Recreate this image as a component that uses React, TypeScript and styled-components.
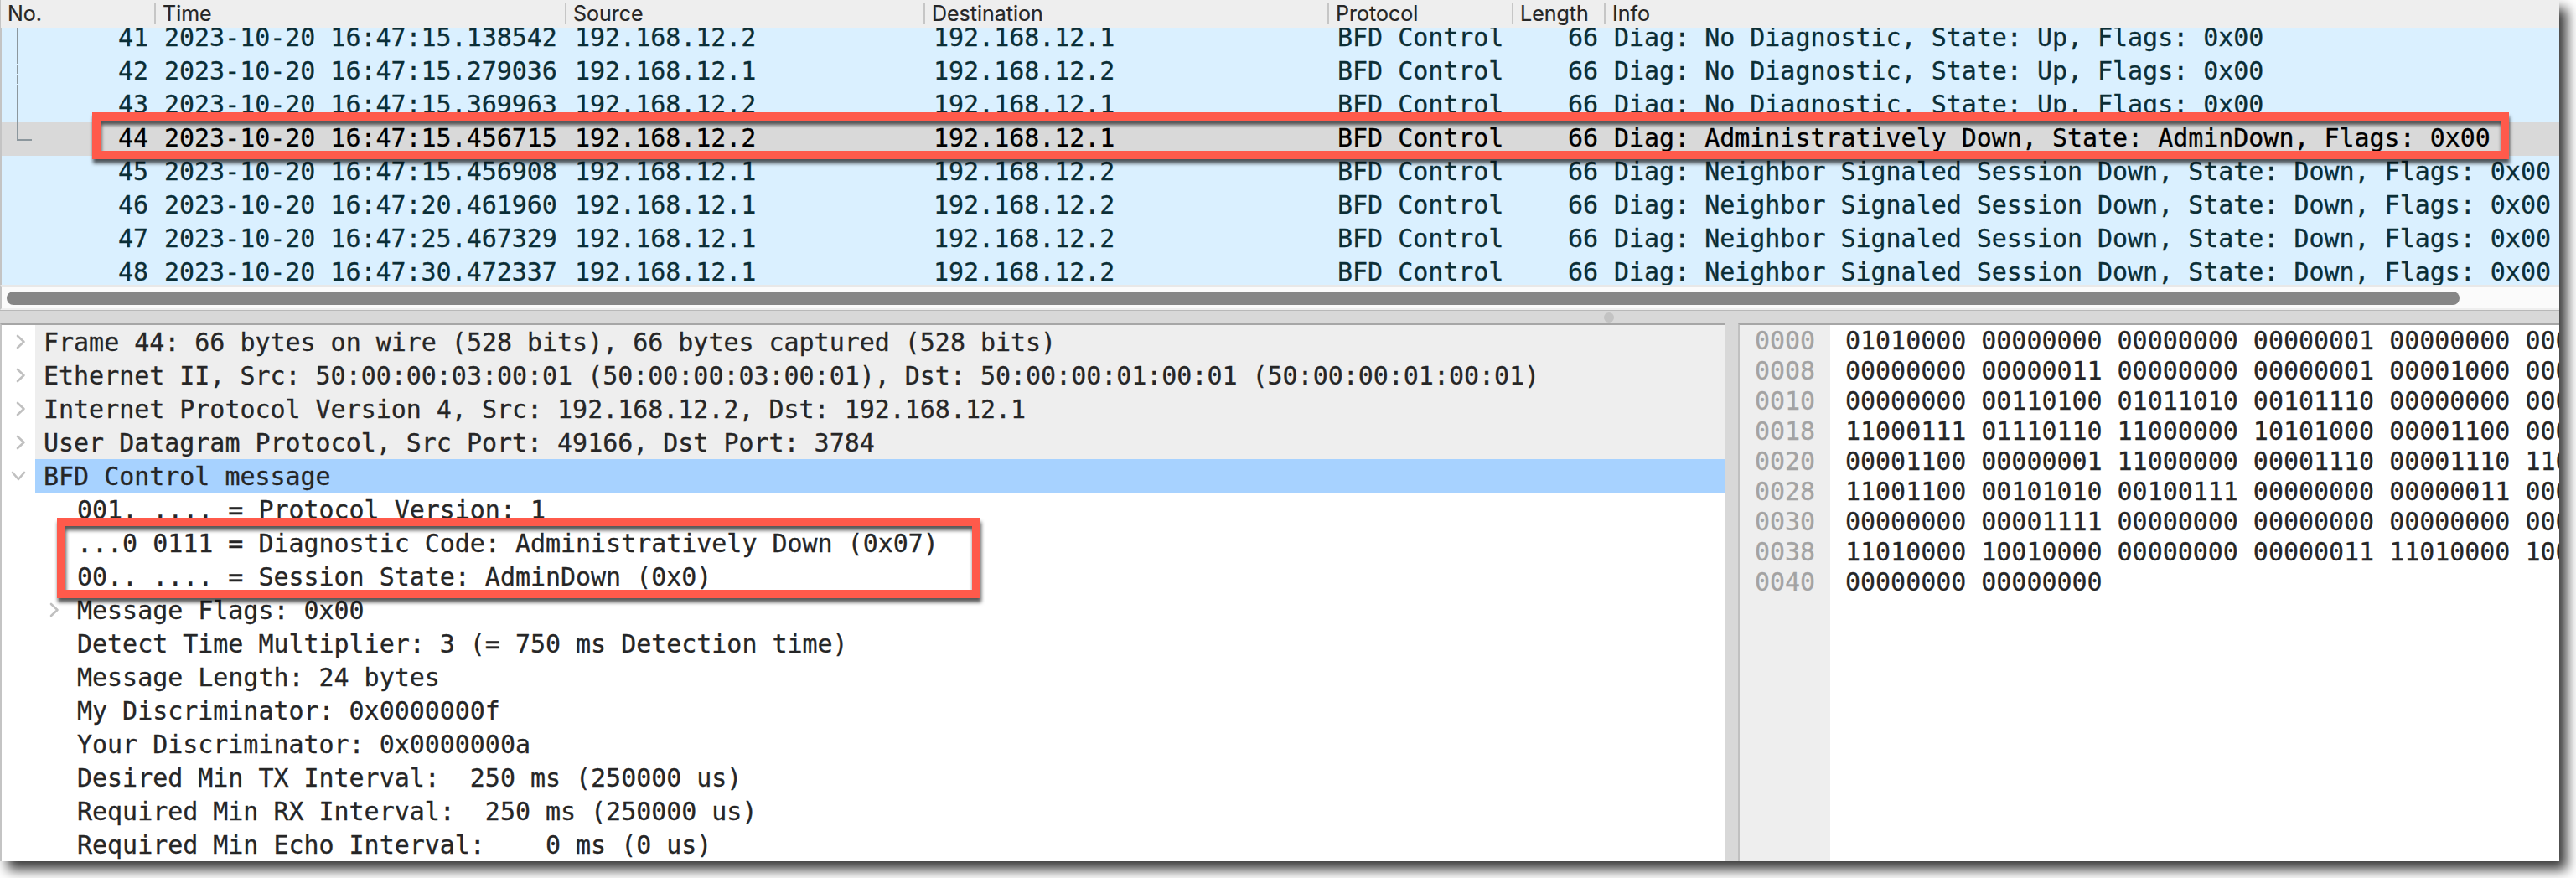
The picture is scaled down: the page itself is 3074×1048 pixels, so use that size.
import styled, { createGlobalStyle } from 'styled-components';

const packets = [
  { no: 41, time: '2023-10-20 16:47:15.138542', src: '192.168.12.2', dst: '192.168.12.1', info: 'Diag: No Diagnostic, State: Up, Flags: 0x00' },
  { no: 42, time: '2023-10-20 16:47:15.279036', src: '192.168.12.1', dst: '192.168.12.2', info: 'Diag: No Diagnostic, State: Up, Flags: 0x00' },
  { no: 43, time: '2023-10-20 16:47:15.369963', src: '192.168.12.2', dst: '192.168.12.1', info: 'Diag: No Diagnostic, State: Up, Flags: 0x00' },
  { no: 44, time: '2023-10-20 16:47:15.456715', src: '192.168.12.2', dst: '192.168.12.1', info: 'Diag: Administratively Down, State: AdminDown, Flags: 0x00' },
  { no: 45, time: '2023-10-20 16:47:15.456908', src: '192.168.12.1', dst: '192.168.12.2', info: 'Diag: Neighbor Signaled Session Down, State: Down, Flags: 0x00' },
  { no: 46, time: '2023-10-20 16:47:20.461960', src: '192.168.12.1', dst: '192.168.12.2', info: 'Diag: Neighbor Signaled Session Down, State: Down, Flags: 0x00' },
  { no: 47, time: '2023-10-20 16:47:25.467329', src: '192.168.12.1', dst: '192.168.12.2', info: 'Diag: Neighbor Signaled Session Down, State: Down, Flags: 0x00' },
  { no: 48, time: '2023-10-20 16:47:30.472337', src: '192.168.12.1', dst: '192.168.12.2', info: 'Diag: Neighbor Signaled Session Down, State: Down, Flags: 0x00' },
];

const columns = ['No.', 'Time', 'Source', 'Destination', 'Protocol', 'Length', 'Info'];

type Kind = 'layer' | 'selected' | 'field';

const details: { text: string; kind: Kind; arrow?: 'right' | 'down' }[] = [
  { text: 'Frame 44: 66 bytes on wire (528 bits), 66 bytes captured (528 bits)', kind: 'layer', arrow: 'right' },
  { text: 'Ethernet II, Src: 50:00:00:03:00:01 (50:00:00:03:00:01), Dst: 50:00:00:01:00:01 (50:00:00:01:00:01)', kind: 'layer', arrow: 'right' },
  { text: 'Internet Protocol Version 4, Src: 192.168.12.2, Dst: 192.168.12.1', kind: 'layer', arrow: 'right' },
  { text: 'User Datagram Protocol, Src Port: 49166, Dst Port: 3784', kind: 'layer', arrow: 'right' },
  { text: 'BFD Control message', kind: 'selected', arrow: 'down' },
  { text: '001. .... = Protocol Version: 1', kind: 'field' },
  { text: '...0 0111 = Diagnostic Code: Administratively Down (0x07)', kind: 'field' },
  { text: '00.. .... = Session State: AdminDown (0x0)', kind: 'field' },
  { text: 'Message Flags: 0x00', kind: 'field', arrow: 'right' },
  { text: 'Detect Time Multiplier: 3 (= 750 ms Detection time)', kind: 'field' },
  { text: 'Message Length: 24 bytes', kind: 'field' },
  { text: 'My Discriminator: 0x0000000f', kind: 'field' },
  { text: 'Your Discriminator: 0x0000000a', kind: 'field' },
  { text: 'Desired Min TX Interval:  250 ms (250000 us)', kind: 'field' },
  { text: 'Required Min RX Interval:  250 ms (250000 us)', kind: 'field' },
  { text: 'Required Min Echo Interval:    0 ms (0 us)', kind: 'field' },
];

const bytes = [
  ['0000', '01010000 00000000 00000000 00000001 00000000 000'],
  ['0008', '00000000 00000011 00000000 00000001 00001000 000'],
  ['0010', '00000000 00110100 01011010 00101110 00000000 000'],
  ['0018', '11000111 01110110 11000000 10101000 00001100 000'],
  ['0020', '00001100 00000001 11000000 00001110 00001110 110'],
  ['0028', '11001100 00101010 00100111 00000000 00000011 000'],
  ['0030', '00000000 00001111 00000000 00000000 00000000 000'],
  ['0038', '11010000 10010000 00000000 00000011 11010000 100'],
  ['0040', '00000000 00000000'],
];

export default function App() {
  return (
    <Desktop>
      <GlobalStyle />
      <Window>
        <Header>
          {columns.map((name) => (
            <HeaderCell key={name}>{name}</HeaderCell>
          ))}
        </Header>
        <PacketList>
          <PacketRows>
            {packets.map((p) => (
              <PacketRow key={p.no} $selected={p.no === 44}>
                <Cell $right>{p.no}</Cell>
                <Cell>{p.time}</Cell>
                <Cell>{p.src}</Cell>
                <Cell>{p.dst}</Cell>
                <Cell>BFD Control</Cell>
                <Cell $right>66</Cell>
                <Cell>{p.info}</Cell>
              </PacketRow>
            ))}
          </PacketRows>
          <RelatedLine width="40" height="140" viewBox="0 0 40 140">
            <path d="M19 0V42M19 44V54M19 56V66M19 68V133H36" />
          </RelatedLine>
        </PacketList>
        <ScrollTrack>
          <ScrollThumb />
        </ScrollTrack>
        <Splitter>
          <Grip />
        </Splitter>
        <Panes>
          <DetailPane>
            {details.map((d) => (
              <DetailRow key={d.text}>
                <Gutter $nested={d.kind === 'field'}>
                  {d.arrow === 'right' && (
                    <Arrow width="12" height="18" viewBox="0 0 12 18">
                      <path d="M2 2L9.5 9L2 16" />
                    </Arrow>
                  )}
                  {d.arrow === 'down' && (
                    <Arrow width="18" height="12" viewBox="0 0 18 12">
                      <path d="M2 2L9 10L16 2" />
                    </Arrow>
                  )}
                </Gutter>
                <DetailText $kind={d.kind}>{d.text}</DetailText>
              </DetailRow>
            ))}
          </DetailPane>
          <Divider />
          <BytesPane>
            <Offsets>
              {bytes.map(([offset]) => (
                <ByteLine key={offset}>{offset}</ByteLine>
              ))}
            </Offsets>
            <Bits>
              {bytes.map(([offset, bits]) => (
                <ByteLine key={offset}>{bits}</ByteLine>
              ))}
            </Bits>
          </BytesPane>
        </Panes>
      </Window>
      <Callout $x={110} $y={134} $w={2884} $h={56} />
      <Callout $x={68} $y={618} $w={1102} $h={96} />
    </Desktop>
  );
}

const GlobalStyle = createGlobalStyle`
  * {
    box-sizing: border-box;
  }

  body {
    margin: 0;
    background: #fff;
  }
`;

const Desktop = styled.div`
  position: relative;
  width: 3074px;
  height: 1048px;
  padding: 0 20px 20px 0;
  overflow: hidden;
  background: #fff;
`;

const Window = styled.div`
  display: flex;
  flex-direction: column;
  height: 1028px;
  background: #fff;
  color: #262626;
  font-family: 'DejaVu Sans Mono', monospace;
  font-size: 30px;
  letter-spacing: -0.03px;
  -webkit-text-stroke: 0.3px;
  white-space: pre;
  box-shadow: 9px 10px 14px rgba(0, 0, 0, 0.78);
`;

const Header = styled.div`
  display: grid;
  grid-template-columns: 185px 490px 428px 482px 220px 110px 1fr;
  height: 34px;
  padding: 3px 0 5px;
  background: #eee;
  border-left: 1px solid #c4c4c4;
  font-family: Inter, sans-serif;
  font-size: 25px;
  letter-spacing: 0;
  -webkit-text-stroke: 0.2px;
`;

const HeaderCell = styled.div`
  padding-left: 8px;
  line-height: 26px;
  border-right: 2px solid #c6c6c6;

  &:last-child {
    border-right: none;
  }
`;

const PacketList = styled.div`
  position: relative;
  height: 306px;
  overflow: hidden;
  border-left: 2px solid #c4c4c4;
`;

const PacketRows = styled.div`
  margin-top: -8px;
`;

const PacketRow = styled.div<{ $selected: boolean }>`
  display: grid;
  grid-template-columns: 184px 490px 428px 482px 220px 110px 1fr;
  height: 40px;
  line-height: 37px;
  background: ${({ $selected }) => ($selected ? '#d9d9d9' : '#daf0ff')};
  color: ${({ $selected }) => ($selected ? '#000' : '#0b2e36')};
`;

const Cell = styled.div<{ $right?: boolean }>`
  padding: 0 9px 0 10px;
  text-align: ${({ $right }) => ($right ? 'right' : 'left')};
`;

const RelatedLine = styled.svg`
  position: absolute;
  left: 0;
  top: 0;
  fill: none;
  stroke: #8c979d;
  stroke-width: 2;
`;

const ScrollTrack = styled.div`
  height: 30px;
  padding: 6px 119px 0 6px;
  background: #fbfbfb;
  border-top: 2px solid #e8e8e8;
  border-bottom: 2px solid #efefef;
  border-left: 2px solid #c4c4c4;
`;

const ScrollThumb = styled.div`
  height: 16px;
  border-radius: 8px;
  background: #868686;
`;

const Splitter = styled.div`
  display: flex;
  align-items: center;
  height: 16px;
  padding-left: 1914px;
  background: #d8d8d8;
  border-top: 1px solid #b8b8b8;
`;

const Grip = styled.div`
  width: 12px;
  height: 12px;
  border-radius: 50%;
  background: #c3c3c3;
`;

const Panes = styled.div`
  display: flex;
  height: 642px;
  overflow: hidden;
`;

const DetailPane = styled.div`
  width: 2059px;
  border-style: solid;
  border-width: 2px 1px 0 2px;
  border-color: #a6a6a6 #b8b8b8 #b8b8b8 #c4c4c4;
`;

const DetailRow = styled.div`
  display: flex;
  height: 40px;
`;

const Gutter = styled.div<{ $nested: boolean }>`
  display: flex;
  align-items: center;
  justify-content: flex-end;
  width: ${({ $nested }) => ($nested ? 80 : 40)}px;
  padding-right: 11px;
`;

const Arrow = styled.svg`
  fill: none;
  stroke: #c0c0c0;
  stroke-width: 2.6;
  stroke-linecap: round;
  stroke-linejoin: round;
`;

const backgrounds: Record<Kind, string> = {
  layer: '#eee',
  selected: '#a7d2ff',
  field: '#fff',
};

const DetailText = styled.div<{ $kind: Kind }>`
  flex: 1;
  padding: 1px 0 0 10px;
  line-height: 40px;
  background: ${({ $kind }) => backgrounds[$kind]};
`;

const Divider = styled.div`
  width: 15px;
  background: #d8d8d8;
`;

const BytesPane = styled.div`
  display: flex;
  flex: 1;
  min-width: 0;
  border-top: 2px solid #a6a6a6;
  border-left: 2px solid #c0c0c0;
`;

const Offsets = styled.div`
  width: 108px;
  padding-left: 18px;
  background: #eee;
  color: #a3a3a3;
`;

const Bits = styled.div`
  flex: 1;
  min-width: 0;
  padding-left: 18px;
  overflow: hidden;
`;

const ByteLine = styled.div`
  height: 36px;
  line-height: 38px;
`;

// Annotation frame drawn over the capture
const Callout = styled.div<{ $x: number; $y: number; $w: number; $h: number }>`
  position: absolute;
  left: ${({ $x }) => $x}px;
  top: ${({ $y }) => $y}px;
  width: ${({ $w }) => $w}px;
  height: ${({ $h }) => $h}px;
  border: 10px solid #ff5a4b;
  filter: drop-shadow(1px 5px 2px rgba(0, 0, 0, 0.65));
`;
